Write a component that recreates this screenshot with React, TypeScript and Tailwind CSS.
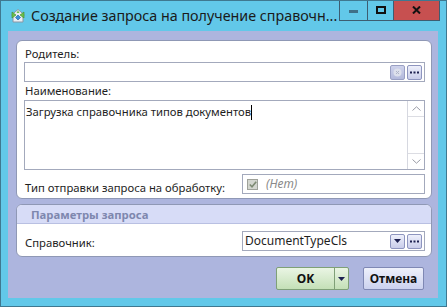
import React from "react";

function TitleIcon() {
  return (
    <svg width="16" height="16" viewBox="0 0 16 16">
      <path d="M8 1.5 L14.5 7 L13 7 L13 14 L3 14 L3 7 L1.5 7 Z" fill="#e9eef3" stroke="#8a96a4" strokeWidth="1" />
      <path d="M2 4 L6 7 L2 10 Z" fill="#6cc04a" stroke="#3f8f2a" strokeWidth="0.6" />
      <path d="M14 4 L10 7 L14 10 Z" fill="#6cc04a" stroke="#3f8f2a" strokeWidth="0.6" />
      <path d="M8 7 L10.5 9.5 L8 12 L5.5 9.5 Z" fill="#3b8fd9" stroke="#1f5e9c" strokeWidth="0.6" />
      <path d="M8 2.5 L9.5 5 L6.5 5 Z" fill="#6cc04a" />
    </svg>
  );
}

function SmallBtn({ children, dark }: { children: React.ReactNode; dark?: boolean }) {
  return (
    <div
      className={
        "w-[15px] h-[15px] border rounded-[2px] flex items-center justify-center " +
        (dark
          ? "border-[#9aa0c4] bg-gradient-to-b from-[#cfd3ec] to-[#b3b9dc]"
          : "border-[#8e95bf] bg-gradient-to-b from-[#eef0fb] to-[#c9cdea]")
      }
    >
      {children}
    </div>
  );
}

function Dots() {
  return (
    <svg width="9" height="3" viewBox="0 0 9 3">
      <rect x="0" y="0.5" width="2" height="2" fill="#1d2050" />
      <rect x="3.5" y="0.5" width="2" height="2" fill="#1d2050" />
      <rect x="7" y="0.5" width="2" height="2" fill="#1d2050" />
    </svg>
  );
}

export default function App() {
  return (
    <div className="w-[447px] h-[307px] bg-[#62c8e9] border border-[#3f7890] flex flex-col font-['Segoe_UI','Noto_Sans',sans-serif] text-[11.3px] text-[#1e1e1e] overflow-hidden">
      {/* title bar */}
      <div className="h-[30px] flex items-start shrink-0">
        <div className="pl-[9px] pt-[7px] shrink-0">
          <TitleIcon />
        </div>
        <div className="pl-[5px] pt-[5px] text-[14.3px] leading-[20px] text-[#1a1a1a] whitespace-nowrap min-w-0">
          Создание запроса на получение справочн...
        </div>
        <div className="flex-1" />
        <div className="flex shrink-0 h-[21px] mt-[-1px] mr-[6px] border-l border-b border-r border-[#3d5d72]">
          <div className="w-[28px] flex items-center justify-center border-r border-[#3d5d72]">
            <div className="w-[9px] h-[3px] bg-[#3f7089] mt-[3px]" />
          </div>
          <div className="w-[26px] flex items-center justify-center border-r border-[#3d5d72]">
            <div className="w-[10px] h-[8px] border-2 border-[#111]" />
          </div>
          <div className="w-[45px] bg-[#c75050] flex items-center justify-center">
            <svg width="9" height="8" viewBox="0 0 9 8">
              <path d="M1 0.5 L8 7.5 M8 0.5 L1 7.5" stroke="#111" strokeWidth="2" />
            </svg>
          </div>
        </div>
      </div>

      {/* client area */}
      <div className="flex-1 ml-[7px] mr-[8px] mb-[8px] bg-[#adb5de] pl-[8px] pr-[6px] pt-[9px] flex flex-col">
        {/* panel 1 */}
        <div className="rounded-[6px] border border-[#8f98b5] bg-white pl-[7px] pr-[6px] pt-[4px] pb-[4px] flex flex-col">
          <div className="h-[17px] leading-[17px] pl-[1px]">Родитель:</div>
          <div className="h-[20px] border border-[#a3a9bc] flex items-center justify-end pr-[2px] gap-[2px]">
            <SmallBtn dark>
              <svg width="9" height="9" viewBox="0 0 9 9">
                <circle cx="4.5" cy="4.5" r="4" fill="#dde0ec" />
                <path d="M3 3 L6 6 M6 3 L3 6" stroke="#aeb3c8" strokeWidth="1" />
              </svg>
            </SmallBtn>
            <SmallBtn>
              <Dots />
            </SmallBtn>
          </div>
          <div className="h-[18px] leading-[18px] pl-[1px]">Наименование:</div>
          <div className="h-[70px] border border-[#a3a9bc] flex">
            <div className="flex-1 pl-[1px] pt-[2px] leading-[18px] flex items-start">
              <span>Загрузка справочника типов документов</span>
              <span className="w-[1px] h-[15px] bg-black mt-[2px]" />
            </div>
            <div className="w-[17px] border-l border-[#d6d8e0] flex flex-col">
              <div className="h-[16px] border-b border-[#dcdde3] flex items-center justify-center">
                <svg width="9" height="5" viewBox="0 0 9 5">
                  <path d="M0.5 4.5 L4.5 0.8 L8.5 4.5" stroke="#9a9ca6" strokeWidth="1" fill="none" />
                </svg>
              </div>
              <div className="flex-1" />
              <div className="h-[16px] border-t border-[#dcdde3] flex items-center justify-center">
                <svg width="9" height="5" viewBox="0 0 9 5">
                  <path d="M0.5 0.5 L4.5 4.2 L8.5 0.5" stroke="#9a9ca6" strokeWidth="1" fill="none" />
                </svg>
              </div>
            </div>
          </div>
          <div className="flex mt-[4px] h-[20px]">
            <div className="flex-1 pl-[1px] pt-[5px] leading-[17px]">Тип отправки запроса на обработку:</div>
            <div className="w-[183px] border border-[#a3a9bc] flex items-center pl-[4px]">
              <div className="w-[11px] h-[11px] border border-[#9fa29a] bg-[#d3d6cf] flex items-center justify-center">
                <svg width="8" height="7" viewBox="0 0 8 7">
                  <path d="M0.8 3.5 L3 5.8 L7.2 0.8" stroke="#7d8a72" strokeWidth="1.6" fill="none" />
                </svg>
              </div>
              <span className="ml-[8px] italic text-[#8a8a8a] text-[12px]">(Нет)</span>
            </div>
          </div>
        </div>

        {/* panel 2 */}
        <div className="mt-[5px] rounded-[6px] border border-[#8f98b5] bg-white flex flex-col overflow-hidden">
          <div className="h-[19px] bg-[#d7dcf7] border-b border-[#b9c0e2] pl-[14px] leading-[19px] font-bold text-[#7e87ae]">
            Параметры запроса
          </div>
          <div className="flex pl-[7px] pr-[6px] pt-[7px] pb-[5px]">
            <div className="flex-1 pl-[1px] pt-[3px] leading-[17px]">Справочник:</div>
            <div className="w-[183px] h-[20px] border border-[#a3a9bc] flex items-center pl-[2px] pr-[2px]">
              <span className="flex-1 text-[12px]">DocumentTypeCls</span>
              <div className="flex gap-[2px]">
                <SmallBtn>
                  <svg width="7" height="4" viewBox="0 0 7 4">
                    <path d="M0 0 L7 0 L3.5 4 Z" fill="#1d2050" />
                  </svg>
                </SmallBtn>
                <SmallBtn>
                  <Dots />
                </SmallBtn>
              </div>
            </div>
          </div>
        </div>

        {/* buttons */}
        <div className="mt-[10px] flex justify-end pr-[8px] gap-[14px]">
          <div className="h-[23px] w-[73px] flex border border-[#7fa077] rounded-[2px] bg-gradient-to-b from-[#eaf5e4] to-[#c4e0b7]">
            <div className="flex-1 flex items-center justify-center font-bold text-[#111] text-[12px]">OK</div>
            <div className="w-[14px] border-l border-[#7fa077] flex items-center justify-center">
              <svg width="7" height="4" viewBox="0 0 7 4">
                <path d="M0 0 L7 0 L3.5 4 Z" fill="#1d2050" />
              </svg>
            </div>
          </div>
          <div className="h-[23px] w-[61px] border border-[#7f88b4] rounded-[2px] bg-gradient-to-b from-[#eef0fb] to-[#ccd2ef] flex items-center justify-center font-bold text-[#111] text-[12px]">
            Отмена
          </div>
        </div>
      </div>
    </div>
  );
}
